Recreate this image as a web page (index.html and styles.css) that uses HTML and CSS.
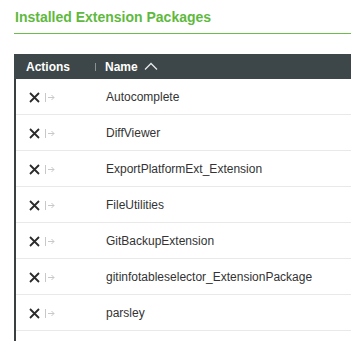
FILE: index.html
```html
<!DOCTYPE html>
<html>
<head>
<meta charset="utf-8">
<link rel="stylesheet" href="styles.css">
</head>
<body>
<div class="page">
  <h2 class="title">Installed Extension Packages</h2>
  <div class="table">
    <div class="head">
      <div class="c-actions">Actions</div>
      <div class="c-name"><span class="sep"></span>Name
        <svg class="chev" width="14" height="8" viewBox="0 0 14 8"><path d="M1 7.5 L7 1.5 L13 7.5" fill="none" stroke="#e6e8e8" stroke-width="1.3"/></svg>
      </div>
    </div>
    <div class="row"><div class="c-actions"><svg class="x" width="11" height="11" viewBox="0 0 11 11"><path d="M1 1 L10 10 M10 1 L1 10" stroke="#2b2b2b" stroke-width="1.8"/></svg><svg class="exp" width="10" height="9" viewBox="0 0 10 9"><path d="M0.5 0 V9 M3 4.5 H9 M6.5 2 L9 4.5 L6.5 7" fill="none" stroke="#c8c8c8" stroke-width="1"/></svg></div><div class="c-name">Autocomplete</div></div>
    <div class="row"><div class="c-actions"><svg class="x" width="11" height="11" viewBox="0 0 11 11"><path d="M1 1 L10 10 M10 1 L1 10" stroke="#2b2b2b" stroke-width="1.8"/></svg><svg class="exp" width="10" height="9" viewBox="0 0 10 9"><path d="M0.5 0 V9 M3 4.5 H9 M6.5 2 L9 4.5 L6.5 7" fill="none" stroke="#c8c8c8" stroke-width="1"/></svg></div><div class="c-name">DiffViewer</div></div>
    <div class="row"><div class="c-actions"><svg class="x" width="11" height="11" viewBox="0 0 11 11"><path d="M1 1 L10 10 M10 1 L1 10" stroke="#2b2b2b" stroke-width="1.8"/></svg><svg class="exp" width="10" height="9" viewBox="0 0 10 9"><path d="M0.5 0 V9 M3 4.5 H9 M6.5 2 L9 4.5 L6.5 7" fill="none" stroke="#c8c8c8" stroke-width="1"/></svg></div><div class="c-name">ExportPlatformExt_Extension</div></div>
    <div class="row"><div class="c-actions"><svg class="x" width="11" height="11" viewBox="0 0 11 11"><path d="M1 1 L10 10 M10 1 L1 10" stroke="#2b2b2b" stroke-width="1.8"/></svg><svg class="exp" width="10" height="9" viewBox="0 0 10 9"><path d="M0.5 0 V9 M3 4.5 H9 M6.5 2 L9 4.5 L6.5 7" fill="none" stroke="#c8c8c8" stroke-width="1"/></svg></div><div class="c-name">FileUtilities</div></div>
    <div class="row"><div class="c-actions"><svg class="x" width="11" height="11" viewBox="0 0 11 11"><path d="M1 1 L10 10 M10 1 L1 10" stroke="#2b2b2b" stroke-width="1.8"/></svg><svg class="exp" width="10" height="9" viewBox="0 0 10 9"><path d="M0.5 0 V9 M3 4.5 H9 M6.5 2 L9 4.5 L6.5 7" fill="none" stroke="#c8c8c8" stroke-width="1"/></svg></div><div class="c-name">GitBackupExtension</div></div>
    <div class="row"><div class="c-actions"><svg class="x" width="11" height="11" viewBox="0 0 11 11"><path d="M1 1 L10 10 M10 1 L1 10" stroke="#2b2b2b" stroke-width="1.8"/></svg><svg class="exp" width="10" height="9" viewBox="0 0 10 9"><path d="M0.5 0 V9 M3 4.5 H9 M6.5 2 L9 4.5 L6.5 7" fill="none" stroke="#c8c8c8" stroke-width="1"/></svg></div><div class="c-name">gitinfotableselector_ExtensionPackage</div></div>
    <div class="row"><div class="c-actions"><svg class="x" width="11" height="11" viewBox="0 0 11 11"><path d="M1 1 L10 10 M10 1 L1 10" stroke="#2b2b2b" stroke-width="1.8"/></svg><svg class="exp" width="10" height="9" viewBox="0 0 10 9"><path d="M0.5 0 V9 M3 4.5 H9 M6.5 2 L9 4.5 L6.5 7" fill="none" stroke="#c8c8c8" stroke-width="1"/></svg></div><div class="c-name">parsley</div></div>
    <div class="tail"></div>
  </div>
</div>
</body>
</html>
```

FILE: styles.css
```css
html, body {
  margin: 0;
  padding: 0;
  background: #ffffff;
}
body {
  font-family: "Liberation Sans", Arial, sans-serif;
  color: #333333;
  overflow: hidden;
}
.page {
  padding: 9px 0 0 14px;
}
.title {
  margin: 0;
  font-size: 14px;
  line-height: 17px;
  font-weight: bold;
  color: #5fb940;
  padding: 0 0 7px 1px;
  border-bottom: 1px solid #6cbd4c;
}
.table {
  margin-top: 20px;
  border-left: 2px solid #3a3f40;
}
.head {
  display: flex;
  align-items: center;
  height: 25px;
  background: #3d4648;
  color: #ffffff;
  font-size: 12px;
  font-weight: bold;
  margin-left: -2px;
}
.head .c-actions {
  width: 69px;
  padding-left: 12px;
}
.head .c-name {
  display: flex;
  align-items: center;
}
.sep {
  display: inline-block;
  width: 1px;
  height: 8px;
  background: #8a9192;
  margin-right: 9px;
}
.chev {
  margin-left: 6px;
  margin-top: -1px;
}
.row {
  display: flex;
  align-items: center;
  height: 35px;
  border-bottom: 1px solid #e9e9e9;
  font-size: 12px;
  padding-top: 1px;
  box-sizing: border-box;
  height: 36px;
}
.row .c-actions {
  width: 77px;
  padding-left: 13px;
  display: flex;
  align-items: center;
}
.x {
  display: block;
}
.exp {
  display: block;
  margin-left: 5px;
}
.tail {
  height: 10px;
}
```
